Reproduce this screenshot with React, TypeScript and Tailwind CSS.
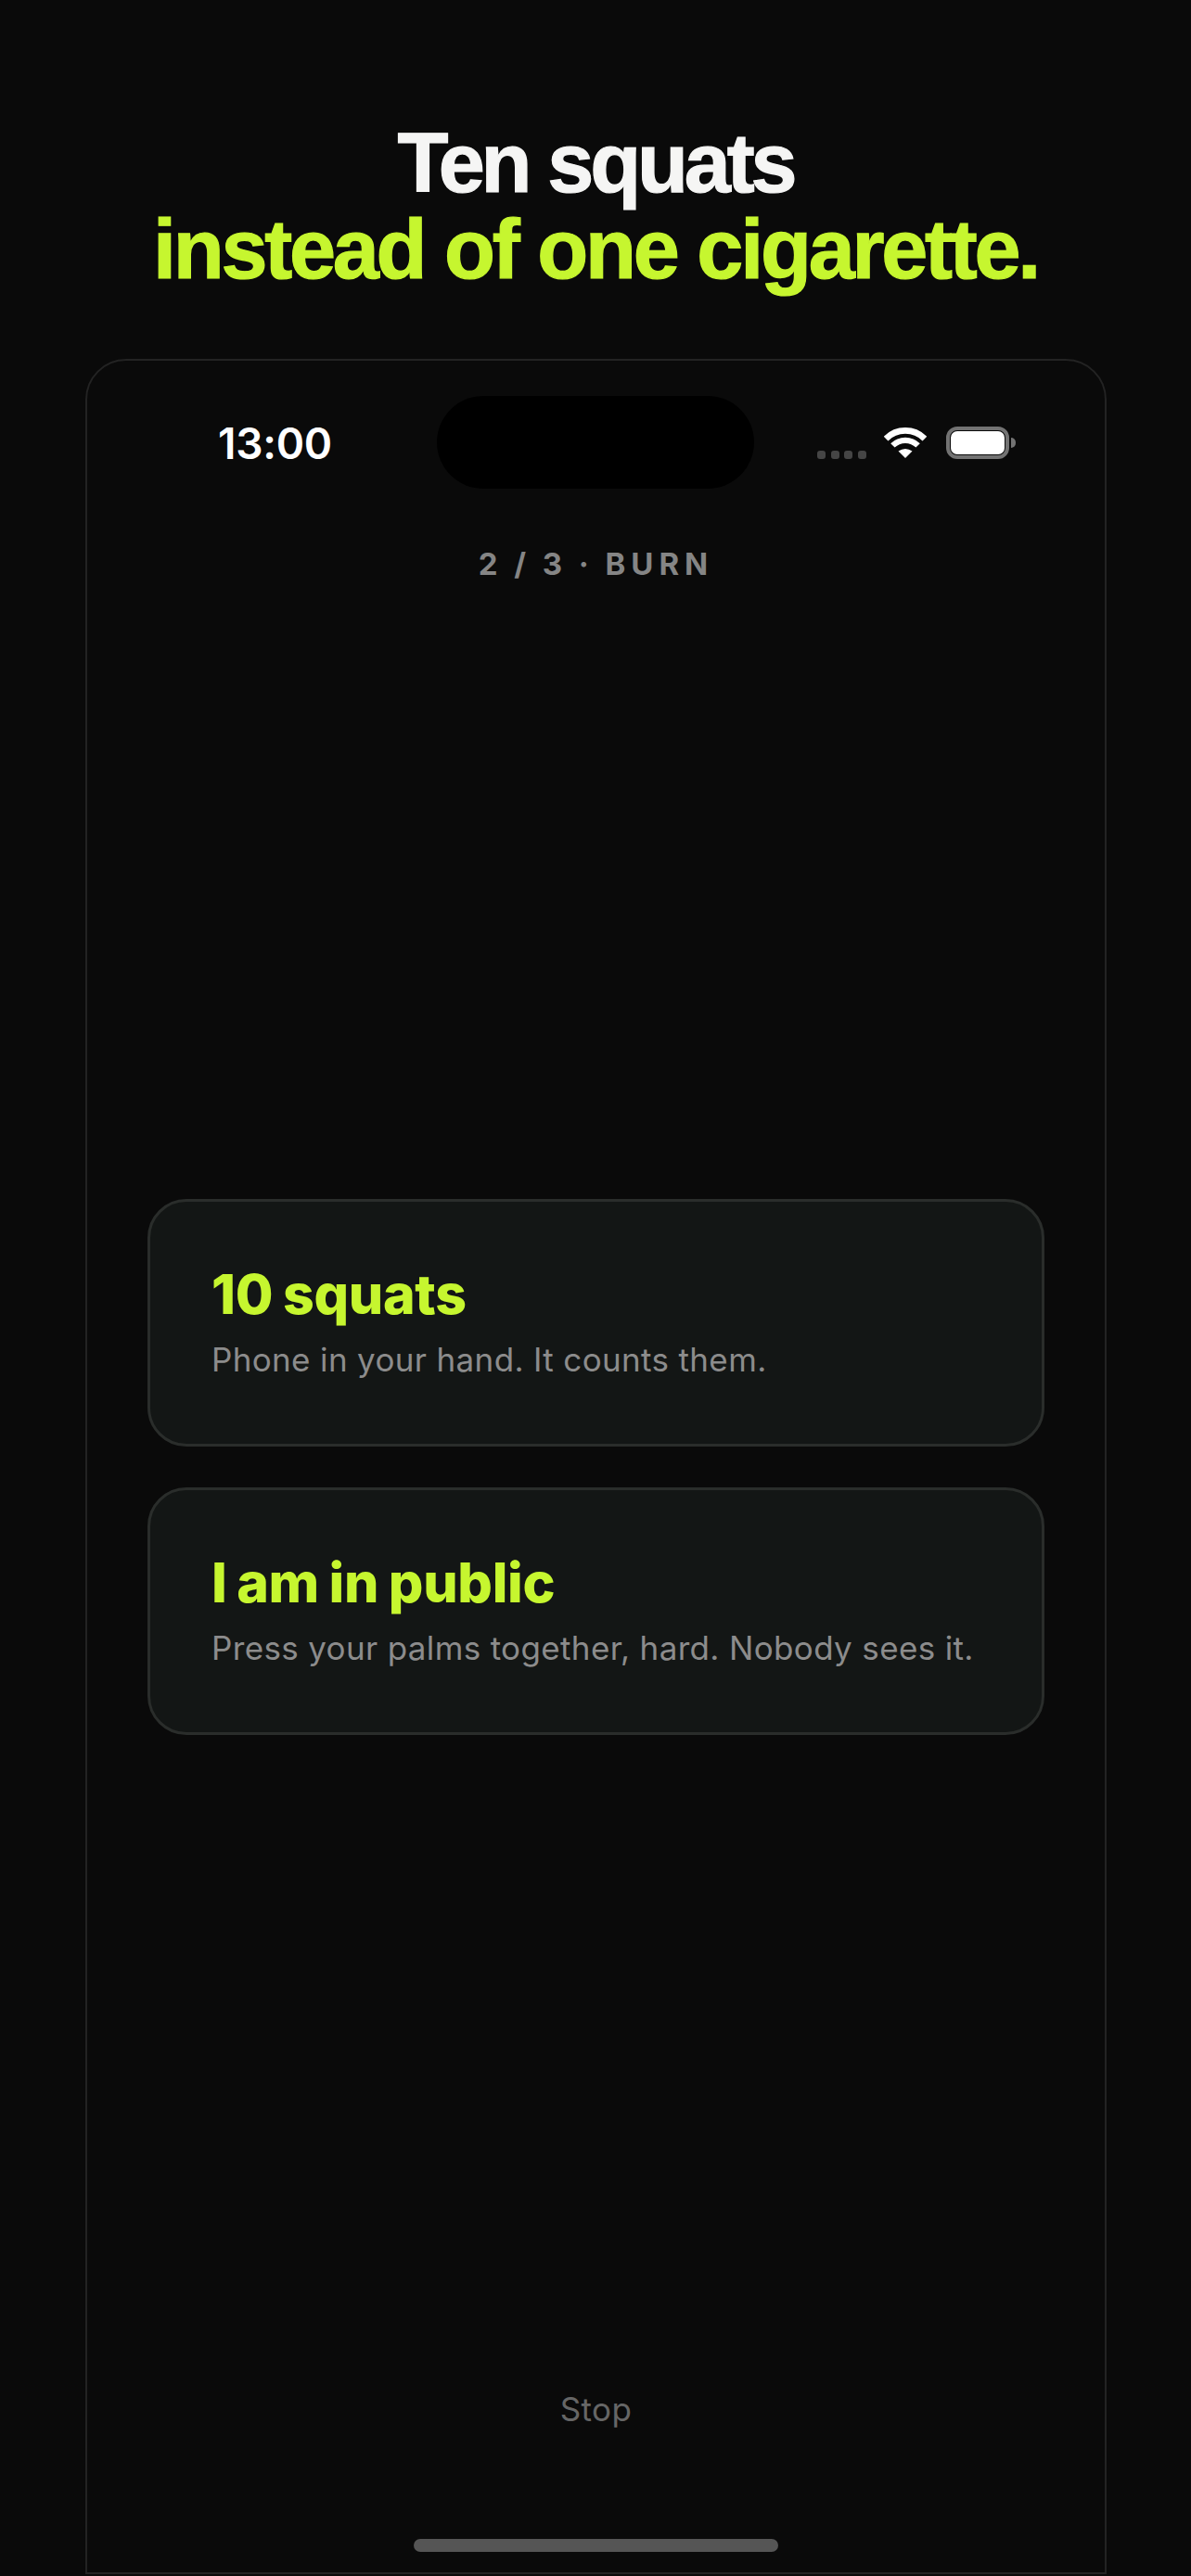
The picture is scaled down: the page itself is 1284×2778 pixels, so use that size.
function WifiIcon() {
  return (
    <svg width="46" height="33" viewBox="0 0 46 33" fill="none">
      <path d="M2.1 12.1A29.5 29.5 0 0 1 43.9 12.1" stroke="#fff" strokeWidth="6.6" />
      <path d="M9.4 19.4A19.3 19.3 0 0 1 36.6 19.4" stroke="#fff" strokeWidth="6.2" />
      <path d="M23 33L15.5 25.6Q23 20.6 30.5 25.6Z" fill="#fff" />
    </svg>
  )
}

function Battery() {
  return (
    <div className="flex items-center">
      <div className="w-[68px] h-[35px] rounded-[12px] border-[4px] border-[#737373] p-px">
        <div className="w-full h-full rounded-[7px] bg-white" />
      </div>
      <div className="w-[5px] h-[11px] ml-[2px] rounded-r-full bg-[#737373]" />
    </div>
  )
}

function SignalDots() {
  return (
    <div className="flex gap-[5.6px] self-end">
      {[0, 1, 2, 3].map((i) => (
        <div key={i} className="w-[9px] h-[9px] rounded-[3px] bg-[#454545]" />
      ))}
    </div>
  )
}

function StatusBar() {
  return (
    <div className="flex items-start h-[100px] mt-[38px] pl-[141px]">
      <span className="w-[236px] mt-[29px] text-[46px] leading-[44px] font-semibold tracking-[-0.005em] text-white">13:00</span>
      <div className="w-[342px] h-[100px] rounded-[50px] bg-black" />
      <div className="flex items-center gap-[19px] h-[35px] mt-[33px] ml-[68px]">
        <SignalDots />
        <WifiIcon />
      </div>
      <div className="mt-[33px] ml-[21px]">
        <Battery />
      </div>
    </div>
  )
}

function OptionCard({ title, text }: { title: string; text: string }) {
  return (
    <div className="h-[267px] rounded-[42px] border-[3px] border-[#2a2d2b] bg-[#131615] pl-[66px] pt-[65px]">
      <h2 className="text-[59px] leading-[70px] font-extrabold tracking-[-0.005em] [word-spacing:-2px] text-[#c6f62f]">{title}</h2>
      <p className="mt-[13px] text-[35px] leading-[44px] tracking-[0.01em] text-[#8c8c8c]">{text}</p>
    </div>
  )
}

export default function App() {
  return (
    <div className="h-[2778px] overflow-hidden flex flex-col bg-[#0a0a0a] [font-family:Inter,sans-serif]">
      <h1 className="pt-[130px] h-[387px] text-center text-[90px] leading-[93px] font-bold tracking-[-0.036em] [-webkit-text-stroke:1.2px] [font-family:'Liberation_Sans',sans-serif]">
        <span className="block tracking-[-0.046em] text-[#f5f5f4]">Ten squats</span>
        <span className="block text-[#c6f62f]">instead of one cigarette.</span>
      </h1>

      <div className="ml-[92px] mr-[91px] mb-[2px] flex-1 flex flex-col rounded-t-[44px] border-[2px] border-[#232323] bg-[#0a0a0a]">
        <StatusBar />
        <p className="mt-[61px] text-center text-[33px] leading-[40px] font-bold tracking-[0.18em] [word-spacing:-2px] text-[#858585]">
          2 / 3 · BURN
        </p>

        <div className="flex-1 flex flex-col justify-center gap-[44px] px-[65px] pb-[40px]">
          <OptionCard title="10 squats" text="Phone in your hand. It counts them." />
          <OptionCard title="I am in public" text="Press your palms together, hard. Nobody sees it." />
        </div>

        <p className="text-center text-[35px] leading-[44px] tracking-[0.01em] text-[#666]">Stop</p>
        <div className="mt-[118px] mb-[22px] mx-auto w-[393px] h-[14px] rounded-full bg-[#555]" />
      </div>
    </div>
  )
}
